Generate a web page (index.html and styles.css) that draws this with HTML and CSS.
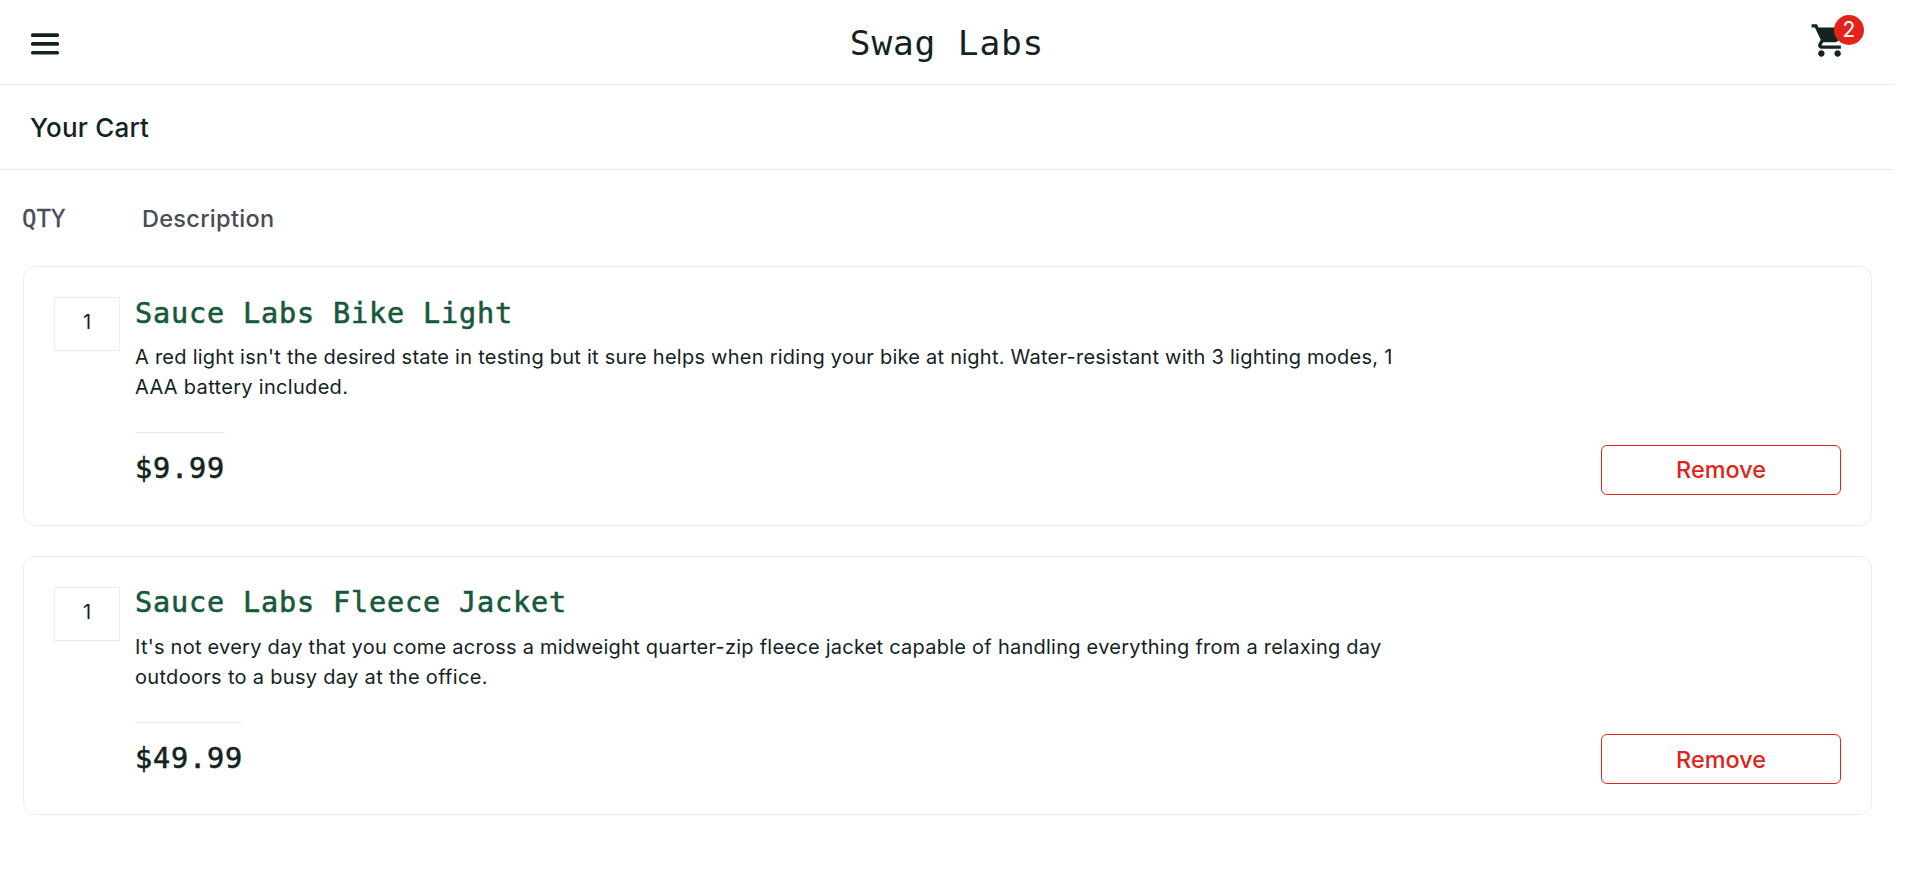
FILE: index.html
```html
<!DOCTYPE html>
<html lang="en">
<head>
<meta charset="utf-8">
<title>Swag Labs</title>
<link rel="stylesheet" href="styles.css">
</head>
<body>
<div class="page">
  <header class="topbar">
    <button class="menu" aria-label="Open menu"><svg class="menu-icon" viewBox="0 0 28 22"><rect width="28" height="3.6" rx="1.5" y="0.3"/><rect width="28" height="3.6" rx="1.5" y="9.1"/><rect width="28" height="3.6" rx="1.5" y="17.9"/></svg></button>
    <h1 class="logo">Swag Labs</h1>
    <a class="cart">
      <svg class="cart-icon" viewBox="0 0 24 24"><path d="M7 18c-1.1 0-1.99.9-1.99 2S5.9 22 7 22s2-.9 2-2-.9-2-2-2zM1 2v2h2l3.6 7.59-1.35 2.45c-.16.28-.25.61-.25.96 0 1.1.9 2 2 2h12v-2H7.42c-.14 0-.25-.11-.25-.25l.03-.12.9-1.63h7.45c.75 0 1.41-.41 1.75-1.03l3.58-6.49A1 1 0 0 0 20 4H5.21l-.94-2H1zm16 16c-1.1 0-1.99.9-1.99 2s.89 2 1.99 2 2-.9 2-2-.9-2-2-2z"/></svg>
      <span class="badge">2</span>
    </a>
  </header>
  <div class="subbar"><span class="page-title">Your Cart</span></div>
  <main class="content">
    <div class="labels"><span class="label-qty">QTY</span><span class="label-desc">Description</span></div>
    <section class="list">
      <article class="item">
        <div class="qty">1</div>
        <div class="body">
          <h2 class="name">Sauce Labs Bike Light</h2>
          <p class="desc"><span class="line">A red light isn't the desired state in testing but it sure helps when riding your bike at night. Water-resistant with 3 lighting modes, 1</span> <span class="line last">AAA battery included.</span></p>
          <div class="pricebar"><div class="price">$9.99</div><button class="remove">Remove</button></div>
        </div>
      </article>
      <article class="item">
        <div class="qty">1</div>
        <div class="body">
          <h2 class="name raised">Sauce Labs Fleece Jacket</h2>
          <p class="desc"><span class="line">It's not every day that you come across a midweight quarter-zip fleece jacket capable of handling everything from a relaxing day</span> <span class="line last">outdoors to a busy day at the office.</span></p>
          <div class="pricebar"><div class="price">$49.99</div><button class="remove low">Remove</button></div>
        </div>
      </article>
    </section>
  </main>
</div>
</body>
</html>
```
FILE: styles.css
```css
* { box-sizing: border-box; }
body { margin: 0; background: #fff; color: #132322; font-family: Inter, "Liberation Sans", sans-serif; }
h1, h2, p { margin: 0; font-weight: 400; }
button { background: none; border: 0; padding: 0; font-family: inherit; }

.page { width: 1894px; }
.topbar { height: 85px; border-bottom: 1px solid #ededed; display: grid; grid-template-columns: 1fr auto 1fr; align-items: start; }
.menu { width: 28px; margin: 33px 0 0 31px; }
.menu-icon { display: block; width: 28px; height: 22px; fill: #132322; }
.logo { font: 400 34.5px/40px "DejaVu Sans Mono", "Liberation Mono", monospace; letter-spacing: 0.83px; padding-top: 23px; }
.cart { justify-self: end; position: relative; width: 60px; height: 60px; margin: 15px 30px 0 0; }
.cart-icon { display: block; width: 39px; height: 39px; margin: 6px 0 0 6px; fill: #132322; }
.badge { position: absolute; top: 0; right: 0; width: 30px; height: 30px; border-radius: 50%; background: #e2231a; color: #fff; font-size: 21px; line-height: 30px; text-align: center; }

.subbar { height: 85px; border-bottom: 1px solid #ededed; padding: 27px 0 0 30px; }
.page-title { display: block; font-size: 26px; line-height: 32px; font-weight: 450; letter-spacing: 0.2px; }

.content { padding: 30px 22px 0 23px; }
.labels { display: flex; height: 66px; color: #484c55; font-size: 23.5px; line-height: 36px; font-weight: 450; padding-top: 1px; }
.label-qty { width: 120px; font-family: "DejaVu Sans Mono", monospace; font-size: 24px; font-weight: 400; margin-left: -1px; -webkit-text-stroke: 0.3px #484c55; }
.label-desc { letter-spacing: 0.3px; }

.list { display: flex; flex-direction: column; gap: 30px; }
.item { height: 260px; display: flex; border: 1px solid #ededed; border-radius: 12px; padding: 30px; }
.item + .item { height: 259px; }
.qty { width: 66px; height: 54px; margin-right: 15px; border: 1px solid #ededed; font-size: 20px; line-height: 48px; text-align: center; }
.body { flex: 1; display: flex; flex-direction: column; }
.name { font: 400 28.5px/34px "DejaVu Sans Mono", "Liberation Mono", monospace; letter-spacing: 0.84px; color: #18583a; -webkit-text-stroke: 0.6px #18583a; height: 45px; }
.name.raised { line-height: 32px; }
.desc { font-size: 20px; line-height: 30px; height: 90px; letter-spacing: 0.247px; }
.line { display: block; white-space: nowrap; width: max-content; }
.last { letter-spacing: 0.31px; }
.pricebar { flex: 1; display: flex; justify-content: space-between; align-items: flex-start; }
.price { font: 400 28.5px/34px "DejaVu Sans Mono", "Liberation Mono", monospace; letter-spacing: 0.84px; border-top: 1px solid #ededed; padding-top: 19px; -webkit-text-stroke: 0.6px #132322; }
.remove { align-self: flex-end; width: 240px; height: 50px; border: 1px solid #e2231a; border-radius: 6px; color: #e2231a; font-size: 23.4px; font-weight: 450; padding-bottom: 1px; }
.low { padding: 1px 0 0; }
```
